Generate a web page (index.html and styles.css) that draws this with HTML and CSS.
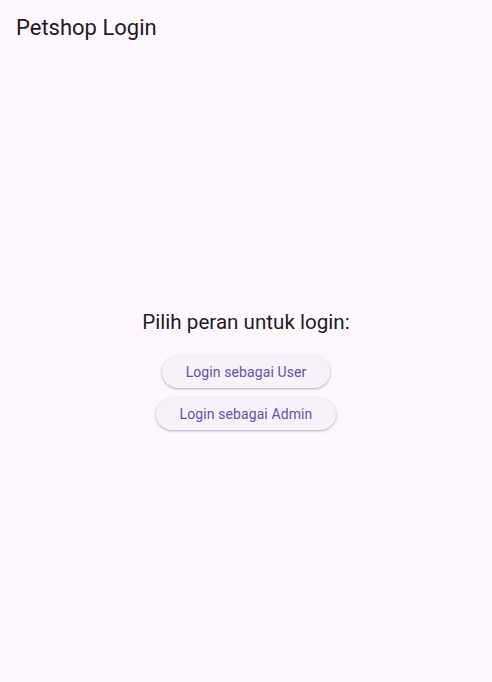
FILE: index.html
```html
<!DOCTYPE html>
<html>
<head>
<meta charset="utf-8">
<link rel="stylesheet" href="styles.css">
</head>
<body>
<div class="app">
  <header class="appbar"><h1 class="title">Petshop Login</h1></header>
  <main class="content">
    <p class="prompt">Pilih peran untuk login:</p>
    <button class="btn">Login sebagai User</button>
    <button class="btn">Login sebagai Admin</button>
  </main>
</div>
</body>
</html>
```
FILE: styles.css
```css
html, body { margin: 0; padding: 0; }
body {
  background: #fef7ff;
  font-family: Roboto, "Noto Sans", sans-serif;
  color: #1d1b20;
}
.app {
  display: flex;
  flex-direction: column;
  height: 682px;
}
.appbar {
  height: 56px;
  display: flex;
  align-items: center;
  padding: 0 16px;
  flex: none;
}
.title {
  margin: 0;
  font-size: 22px;
  font-weight: 400;
  line-height: 28px;
  color: #1d1b20;
}
.content {
  flex: 1;
  display: flex;
  flex-direction: column;
  align-items: center;
  justify-content: center;
}
.prompt {
  margin: 0 0 20px;
  font-size: 20.6px;
  line-height: 28px;
}
.btn {
  height: 32px;
  padding: 0 24px;
  border: none;
  border-radius: 16px;
  background: #f7f2fa;
  color: #6750a4;
  font-family: Roboto, sans-serif;
  font-size: 14px;
  font-weight: 400;
  letter-spacing: 0.1px;
  box-shadow: 0 1px 2px rgba(0,0,0,0.2), 0 1px 3px 1px rgba(0,0,0,0.08);
  margin-bottom: 10px;
}
.btn:last-child { margin-bottom: 0; }
```
